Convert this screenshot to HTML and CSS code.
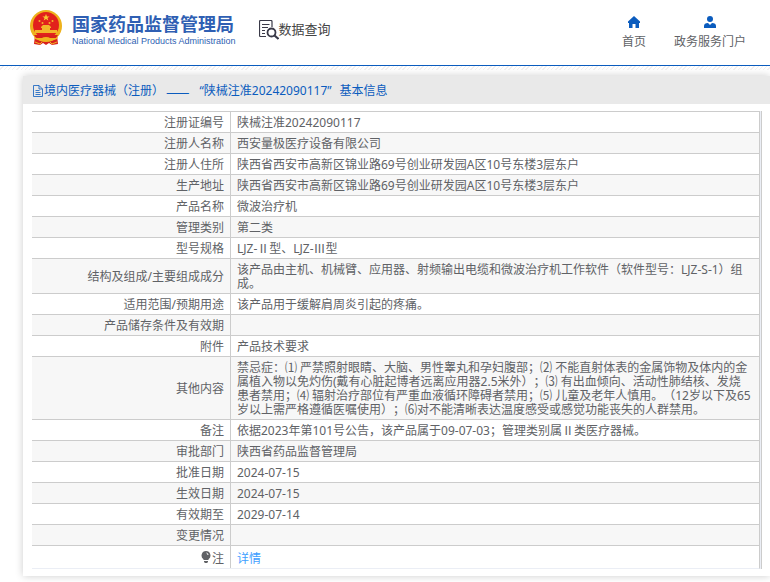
FILE: index.html
```html
<!DOCTYPE html>
<html lang="zh-CN">
<head>
<meta charset="utf-8">
<title>国家药品监督管理局 数据查询</title>
<link rel="stylesheet" href="styles.css">
</head>
<body>
<header class="site-header">
  <a class="brand" href="#">
    <svg class="emblem" viewBox="0 0 32 36" aria-hidden="true">
      <path d="M5 25 4 34l6 1 3-2 3 2 3-2 3 2 6-1-1-9z" fill="#d8201c"/>
      <ellipse cx="16" cy="16" rx="16" ry="16" fill="#eeb21c"/>
      <circle cx="16" cy="15" r="13" fill="#e2211c"/>
      <path d="m16 4 1 2.400h2.600l-2.100 1.600.8 2.600L16 9.100l-2.300 1.500.8-2.600-2.100-1.600H15z" fill="#f8ca32"/>
      <g fill="#f3b52a">
        <circle cx="9.500" cy="11" r="1"/><circle cx="22.500" cy="11" r="1"/><circle cx="12.500" cy="13" r="1"/><circle cx="19.500" cy="13" r="1"/>
        <path d="M11 17l2-2h6l2 2v1h-1v2h7v3H5v-3h7v-2h-1z"/>
      </g>
      <path d="M4 25h24l-2 3H6z" fill="#d8201c"/>
      <path d="M4 27q6 3 8 1 1-1 4-1t4 1q2 2 8-1l-1 2-6 2-2-1-3 1-3-1-2 1-6-2z" fill="#f0b41e"/>
      <path d="m5 32 5 2 2-2M27 32l-5 2-2-2" fill="none" stroke="#f0b41e"/>
    </svg>
    <span class="brand-text">
      <span class="brand-name">国家药品监督管理局</span>
      <span class="brand-sub">National Medical Products Administration</span>
    </span>
  </a>
  <a class="query" href="#">
    <svg class="query-icon" viewBox="0 0 20 20" fill="none" stroke="#3a3a48" aria-hidden="true">
      <path d="M7 16.500H1.500a1 1 0 0 1-1-1v-14a1 1 0 0 1 1-1H12a1 1 0 0 1 1 1V7M3 4.500h7.500M3 7.500h6M3 10.500h3M3 13.500h3" stroke-width="1.200"/>
      <circle cx="12.500" cy="12.500" r="4" stroke-width="1.800"/>
      <path d="m15.500 15.500 4 3.500" stroke-width="2.200"/>
    </svg>
    <span>数据查询</span>
  </a>
  <nav class="site-nav">
    <a href="#">
      <svg viewBox="0 0 12 12" fill="#0b5cbe" aria-hidden="true"><path d="M6 0 0 5.500V7h1v5h3.500V8h3v4H11V7h1V5.500z"/></svg>
      <span>首页</span>
    </a>
    <a href="#">
      <svg viewBox="0 0 12 12" fill="#0b5cbe" aria-hidden="true"><circle cx="6" cy="3" r="3"/><path d="M0 12V10q0-3 4-3l2 2 2-2q4 0 4 3v2z"/></svg>
      <span>政务服务门户</span>
    </a>
  </nav>
</header>
<main class="page">
  <section class="card">
    <h1 class="card-title">
      <svg viewBox="0 0 10 12" fill="none" stroke="#0b5cbe" stroke-width=".8" aria-hidden="true"><path d="M.5.500H6L9.500 4v7.500H.5zM6 .5V4h3.500M2.500 5.500h4M2.500 7.500h5M2.500 9.500h5"/></svg>
      <span class="title-parts"><span>境内医疗器械（注册）</span><span class="dash">——</span><span>“陕械注准20242090117”</span><span>基本信息</span></span>
    </h1>
    <div class="card-body">
      <div class="table-frame">
        <table class="info">
          <tbody>
            <tr><th scope="row">注册证编号</th><td>陕械注准20242090117</td></tr>
            <tr><th scope="row">注册人名称</th><td>西安量极医疗设备有限公司</td></tr>
            <tr><th scope="row">注册人住所</th><td>陕西省西安市高新区锦业路69号创业研发园A区10号东楼3层东户</td></tr>
            <tr><th scope="row">生产地址</th><td>陕西省西安市高新区锦业路69号创业研发园A区10号东楼3层东户</td></tr>
            <tr><th scope="row">产品名称</th><td>微波治疗机</td></tr>
            <tr><th scope="row">管理类别</th><td>第二类</td></tr>
            <tr><th scope="row">型号规格</th><td>LJZ-Ⅱ型、LJZ-Ⅲ型</td></tr>
            <tr><th scope="row">结构及组成/主要组成成分</th><td>该产品由主机、机械臂、应用器、射频输出电缆和微波治疗机工作软件（软件型号：LJZ-S-1）组成。</td></tr>
            <tr><th scope="row">适用范围/预期用途</th><td>该产品用于缓解肩周炎引起的疼痛。</td></tr>
            <tr><th scope="row">产品储存条件及有效期</th><td></td></tr>
            <tr><th scope="row">附件</th><td>产品技术要求</td></tr>
            <tr><th scope="row">其他内容</th><td>禁忌症：⑴ 严禁照射眼睛、大脑、男性睾丸和孕妇腹部；⑵ 不能直射体表的金属饰物及体内的金属植入物以免灼伤(戴有心脏起博者远离应用器2.5米外）；⑶ 有出血倾向、活动性肺结核、发烧<br>患者禁用；⑷ 辐射治疗部位有严重血液循环障碍者禁用；⑸ 儿童及老年人慎用。（12岁以下及65<br>岁以上需严格遵循医嘱使用）；⑹对不能清晰表达温度感受或感觉功能丧失的人群禁用。</td></tr>
            <tr><th scope="row">备注</th><td>依据2023年第101号公告，该产品属于09-07-03；管理类别属Ⅱ类医疗器械。</td></tr>
            <tr><th scope="row">审批部门</th><td>陕西省药品监督管理局</td></tr>
            <tr><th scope="row">批准日期</th><td>2024-07-15</td></tr>
            <tr><th scope="row">生效日期</th><td>2024-07-15</td></tr>
            <tr><th scope="row">有效期至</th><td>2029-07-14</td></tr>
            <tr><th scope="row">变更情况</th><td></td></tr>
            <tr class="note"><th scope="row"><svg class="bulb" viewBox="0 0 10 12" aria-hidden="true"><path d="M5 0a4.500 4.500 0 0 1 2.500 8.200V9h-5v-.8A4.500 4.500 0 0 1 5 0zM3 10h4v1l-1 1H4l-1-1z" fill="#606266"/><path d="M5.500 2q1.500.4 1.500 2" fill="none" stroke="#fff"/></svg>注</th><td><a href="#">详情</a></td></tr>
          </tbody>
        </table>
      </div>
    </div>
  </section>
</main>
</body>
</html>
```
FILE: styles.css
```css
* { box-sizing: border-box; }

body {
  margin: 0;
  background: #fff;
  color: #606266;
  font: 12px/14px "Noto Sans", "Noto Sans CJK SC", sans-serif;
  text-spacing-trim: space-all;
}

a { color: inherit; text-decoration: none; }
svg { display: block; flex: none; }

.site-header {
  display: flex;
  height: 66px;
  padding: 10px 24px 0 30px;
  border-bottom: 1px solid #0b5cbe;
}

.brand { display: flex; gap: 10px; color: #2f5fb3; }
.emblem { width: 32px; height: 36px; }
.brand-text { display: flex; flex-direction: column; padding-top: 4px; white-space: nowrap; }
.brand-name { font-size: 18px; line-height: 20px; font-weight: 700; }
.brand-sub { font: 9px/14px "Liberation Sans", sans-serif; }

.query {
  display: flex;
  margin-left: 23px;
  padding-top: 10px;
  color: #444;
  font-size: 13px;
  line-height: 18px;
}
.query-icon { width: 20px; height: 20px; }

.site-nav { display: flex; gap: 28px; margin-left: auto; padding-top: 6px; }
.site-nav a { display: flex; flex-direction: column; align-items: center; gap: 7px; }
.site-nav svg { width: 12px; height: 12px; }

.page {
  padding: 10px 0 8px 23px;
  overflow: hidden;
  background: repeating-linear-gradient(135deg, #fff 0 2px, #f3f0f0 2px 3px) 0 0 / 100% 4px no-repeat;
}

.card { background: #fff; box-shadow: 0 0 8px rgba(0, 0, 0, .2); }

.card-title {
  display: flex;
  align-items: center;
  gap: 1px;
  height: 28px;
  margin: 0;
  padding: 2px 0 0 10px;
  background: #e9e9e9;
  color: #0b5cbe;
  font-size: 12px;
  font-weight: 400;
}
.card-title svg { width: 10px; height: 12px; }
.title-parts { display: flex; gap: 8px; }
.dash { margin: 0 2px 0 -6px; font: 14px/14px "Noto Sans CJK SC", sans-serif; }

.card-body { padding: 7px 8px 7px 9px; }

.table-frame { padding-right: 1px; border-right: 1px solid #ccc; background: #ebeef5; }

.info {
  width: 100%;
  border-collapse: separate;
  border-spacing: 0;
  border-right: 1px solid #ccc;
  border-bottom: 1px solid #ebeef5;
  background: #fff;
}
.info th, .info td {
  height: 21px;
  padding: 4px 6px 2px;
  border-top: 1px solid #ccc;
  font-weight: 400;
}
.info th { width: 199px; border-right: 1px solid #ccc; text-align: right; }
.info td { padding-right: 5px; text-align: left; }
.info tr:nth-child(even) { background: #f7f7f7; }
.info .note th, .info .note td { height: 23px; padding-top: 5px; }
.info a { color: #409eff; }
.bulb { display: inline-block; width: 10px; height: 12px; margin-right: 1px; }
```
